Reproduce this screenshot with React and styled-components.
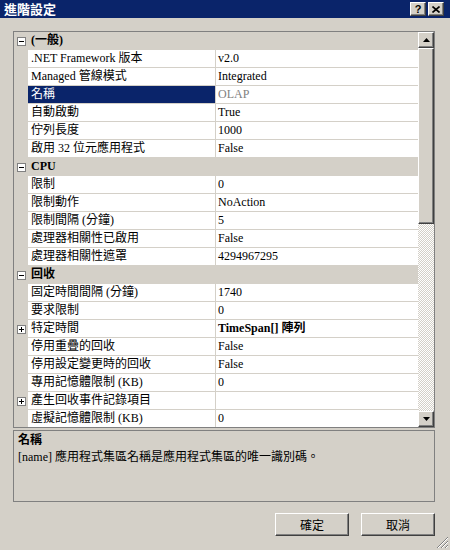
import React from 'react';
import styled, { createGlobalStyle, css } from 'styled-components';

// Estilos globais
const GlobalStyle = createGlobalStyle`
  html, body {
    margin: 0;
    padding: 0;
    background: #d4d0c8;
  }
  body {
    font-family: "Liberation Serif", "Noto Sans CJK TC", serif;
    font-size: 12px;
  }
`;

const raised = css`
  border: 1px solid;
  border-color: #ffffff #404040 #404040 #ffffff;
  box-shadow: inset -1px -1px #808080;
  background: #d4d0c8;
  box-sizing: border-box;
`;

const Window = styled.div`
  width: 450px;
  height: 550px;
  display: flex;
  flex-direction: column;
  background: #d4d0c8;
  position: relative;
  overflow: hidden;
`;

const TitleBar = styled.div`
  height: 18px;
  background: #0a246a;
  display: flex;
  align-items: center;
  padding: 0 6px 0 4px;
  gap: 2px;

  h1 {
    flex: 1;
    margin: 0;
    color: #ffffff;
    font-family: "Noto Sans CJK TC", sans-serif;
    font-size: 13px;
    font-weight: bold;
    line-height: 18px;
  }
`;

const CaptionButton = styled.div`
  ${raised};
  width: 16px;
  height: 14px;
  display: flex;
  align-items: center;
  justify-content: center;
  font-family: "Liberation Sans", sans-serif;
  font-weight: bold;
  font-size: 11px;
  line-height: 1;
  color: #000;
`;

const Body = styled.div`
  flex: 1;
  display: flex;
  flex-direction: column;
  padding: 13px 15px 0 13px;
`;

const Grid = styled.div`
  height: 397px;
  box-sizing: border-box;
  border: 1px solid #808080;
  display: flex;
  background: #d4d0c8;
`;

const List = styled.div`
  flex: 1;
  overflow: hidden;
`;

const Row = styled.div`
  display: flex;
  height: 18px;
  line-height: 17px;
  background: #d4d0c8;
`;

const Gutter = styled.div`
  width: 14px;
  flex: none;
  display: flex;
  align-items: center;
  justify-content: center;
  padding-left: 1px;
  box-sizing: border-box;
`;

const ExpandBox = styled.div`
  width: 9px;
  height: 9px;
  box-sizing: border-box;
  border: 1px solid #808080;
  background: #ffffff;
  position: relative;

  &::before {
    content: '';
    position: absolute;
    left: 1px;
    top: 3px;
    width: 5px;
    height: 1px;
    background: #000;
  }

  ${(p) =>
    p.$plus &&
    css`
      &::after {
        content: '';
        position: absolute;
        left: 3px;
        top: 1px;
        width: 1px;
        height: 5px;
        background: #000;
      }
    `}
`;

const NameCell = styled.div`
  width: 188px;
  flex: none;
  box-sizing: border-box;
  padding-left: 3px;
  border-right: 1px solid #d4d0c8;
  border-bottom: 1px solid #d4d0c8;
  background: ${(p) => (p.$selected ? '#0a246a' : '#ffffff')};
  color: ${(p) => (p.$selected ? '#ffffff' : '#000000')};
  white-space: nowrap;
  overflow: hidden;
`;

const ValueCell = styled.div`
  flex: 1;
  padding-left: 2px;
  border-bottom: 1px solid #d4d0c8;
  background: #ffffff;
  color: ${(p) => (p.$dim ? '#808080' : '#000000')};
  font-weight: ${(p) => (p.$bold ? 'bold' : 'normal')};
  white-space: nowrap;
  overflow: hidden;
`;

const CategoryLabel = styled.div`
  flex: 1;
  padding-left: 3px;
  font-weight: bold;
`;

const ScrollBar = styled.div`
  width: 16px;
  flex: none;
  display: flex;
  flex-direction: column;
  background: repeating-conic-gradient(#d4d0c8 0 25%, #ffffff 0 50%) 0 0 / 2px 2px;
`;

const ArrowButton = styled.div`
  ${raised};
  width: 16px;
  height: 16px;
  flex: none;
  display: flex;
  align-items: center;
  justify-content: center;
`;

const Thumb = styled.div`
  ${raised};
  height: 176px;
  flex: none;
`;

const Track = styled.div`
  flex: 1;
`;

const Description = styled.div`
  margin-top: 2px;
  height: 72px;
  box-sizing: border-box;
  border: 1px solid #808080;
  padding: 1px 4px;
  line-height: 16px;

  h3 {
    margin: 0;
    font-size: 12px;
    font-weight: bold;
    line-height: 17px;
  }
  p {
    margin: 0;
  }
`;

const ButtonRow = styled.div`
  margin-top: 11px;
  display: flex;
  justify-content: flex-end;
  gap: 12px;
`;

const DialogButton = styled.button`
  ${raised};
  width: 74px;
  height: 23px;
  padding: 0;
  font-family: "Noto Sans CJK TC", sans-serif;
  font-size: 12px;
  color: #000;
`;

const Grip = styled.svg`
  position: absolute;
  right: 1px;
  bottom: 1px;
`;

const Arrow = ({ down }) => (
  <svg width="7" height="4" viewBox="0 0 7 4">
    <path d={down ? 'M0 0H7L3.5 4Z' : 'M3.5 0L7 4H0Z'} fill="#000" />
  </svg>
);

const rows = [
  { cat: '(一般)' },
  { name: '.NET Framework 版本', value: 'v2.0' },
  { name: 'Managed 管線模式', value: 'Integrated' },
  { name: '名稱', value: 'OLAP', selected: true },
  { name: '自動啟動', value: 'True' },
  { name: '佇列長度', value: '1000' },
  { name: '啟用 32 位元應用程式', value: 'False' },
  { cat: 'CPU' },
  { name: '限制', value: '0' },
  { name: '限制動作', value: 'NoAction' },
  { name: '限制間隔 (分鐘)', value: '5' },
  { name: '處理器相關性已啟用', value: 'False' },
  { name: '處理器相關性遮罩', value: '4294967295' },
  { cat: '回收' },
  { name: '固定時間間隔 (分鐘)', value: '1740' },
  { name: '要求限制', value: '0' },
  { name: '特定時間', value: 'TimeSpan[] 陣列', plus: true, bold: true },
  { name: '停用重疊的回收', value: 'False' },
  { name: '停用設定變更時的回收', value: 'False' },
  { name: '專用記憶體限制 (KB)', value: '0' },
  { name: '產生回收事件記錄項目', value: '', plus: true },
  { name: '虛擬記憶體限制 (KB)', value: '0' },
];

function App() {
  return (
    <Window>
      <GlobalStyle />
      <TitleBar>
        <h1>進階設定</h1>
        <CaptionButton>?</CaptionButton>
        <CaptionButton>
          <svg width="8" height="7" viewBox="0 0 8 7">
            <path d="M0.5 0.5L7.5 6.5M7.5 0.5L0.5 6.5" stroke="#000" strokeWidth="1.6" />
          </svg>
        </CaptionButton>
      </TitleBar>

      <Body>
        <Grid>
          <List>
            {rows.map((r, i) =>
              r.cat ? (
                <Row key={i}>
                  <Gutter>
                    <ExpandBox />
                  </Gutter>
                  <CategoryLabel>{r.cat}</CategoryLabel>
                </Row>
              ) : (
                <Row key={i}>
                  <Gutter>{r.plus && <ExpandBox $plus />}</Gutter>
                  <NameCell $selected={r.selected}>{r.name}</NameCell>
                  <ValueCell $dim={r.selected} $bold={r.bold}>
                    {r.value}
                  </ValueCell>
                </Row>
              )
            )}
          </List>
          <ScrollBar>
            <ArrowButton>
              <Arrow />
            </ArrowButton>
            <Thumb />
            <Track />
            <ArrowButton>
              <Arrow down />
            </ArrowButton>
          </ScrollBar>
        </Grid>

        <Description>
          <h3>名稱</h3>
          <p>[name] 應用程式集區名稱是應用程式集區的唯一識別碼。</p>
        </Description>

        <ButtonRow>
          <DialogButton>確定</DialogButton>
          <DialogButton>取消</DialogButton>
        </ButtonRow>
      </Body>

      <Grip width="13" height="13" viewBox="0 0 13 13">
        <path d="M12 1L1 12M12 5L5 12M12 9L9 12" stroke="#808080" strokeWidth="1" />
        <path d="M12 2L2 12M12 6L6 12M12 10L10 12" stroke="#ffffff" strokeWidth="1" />
      </Grip>
    </Window>
  );
}

export default App;
